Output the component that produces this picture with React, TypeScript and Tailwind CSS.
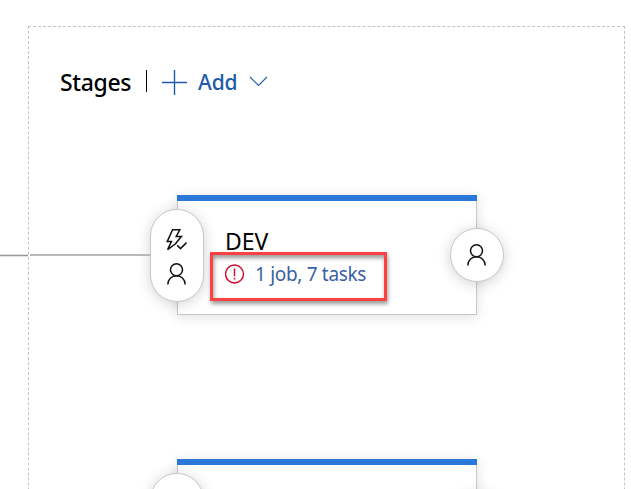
import React from "react";

function PersonIcon() {
  return (
    <svg width="20" height="22" viewBox="0 0 20 22" fill="none" stroke="#111" strokeWidth="1.5">
      <circle cx="9.5" cy="6.8" r="6" />
      <path d="M.8 21.5C.8 16.4 4.6 12.8 9.5 12.8s8.7 3.6 8.7 8.7" />
    </svg>
  );
}

function TriggerIcon() {
  return (
    <svg width="22" height="22" viewBox="0 0 22 22" fill="none" stroke="#111" strokeWidth="1.5">
      <path d="M10.6 14 1.6 20.6 5.4 12.6H1.2L6.6.8h7.2L10.2 7.4h5.2L9 15.2" />
      <path d="m11.2 16.2 3.3 3.4 6-6" />
    </svg>
  );
}

function AlertIcon() {
  return (
    <svg width="20" height="20" viewBox="0 0 20 20" fill="none" stroke="#d0092b" strokeWidth="1.4">
      <circle cx="9.5" cy="10" r="9" />
      <path d="M9.5 4.6v7.6M9.5 13.7v1.8" />
    </svg>
  );
}

const handle =
  "absolute flex flex-col items-center border border-[#c8c8c8] bg-white shadow-[0_2px_14px_rgba(0,0,0,0.18)]";

function Stage({ name, tasks }: { name?: string; tasks?: string }) {
  return (
    <section className="relative h-[120px] w-[300px] border border-t-0 border-[#c8c8c8] bg-white shadow-[0_2px_12px_rgba(0,0,0,0.13)]">
      <div className="-mx-px h-[6px] bg-[#2b78d8]" />
      {name && (
        <div className="pl-[47px] pt-[26px]">
          <h2 className="h-[28px] whitespace-nowrap text-[23px] leading-[28px] tracking-[-0.1px] text-black">{name}</h2>
          <div className="mt-[4px] flex h-[30px] items-center">
            <AlertIcon />
            <span className="ml-[10px] whitespace-nowrap text-[19px] leading-[30px] tracking-[-0.32px] text-[#3a5fa5]">{tasks}</span>
          </div>
        </div>
      )}
      <div className={`${handle} -left-[28px] top-[14px] h-[93px] w-[54px] gap-[12px] rounded-[27px] pt-[19px]`}>
        <TriggerIcon />
        <PersonIcon />
      </div>
      <div className={`${handle} -right-[28px] top-[33px] h-[54px] w-[54px] justify-center rounded-full`}>
        <PersonIcon />
      </div>
    </section>
  );
}

export default function App() {
  return (
    <main className="relative h-[489px] w-[631px] overflow-hidden bg-white pl-[28px] pt-[26px] font-['Noto_Sans',sans-serif]">
      <div className="h-[580px] w-[597px] border border-dashed border-[#c3c3c3]">
        <header className="mt-[41px] flex h-[28px] items-center pl-[31px]">
          <h1 className="w-[71px] whitespace-nowrap text-[23px] font-medium leading-[28px] tracking-[-0.35px] text-black">Stages</h1>
          <span className="ml-[15px] h-[22px] w-px -translate-y-px bg-black" />
          <button className="ml-[15px] flex items-center text-[#215ba7]">
            <svg width="25" height="25" viewBox="0 0 25 25" fill="none" stroke="currentColor" strokeWidth="1.4">
              <path d="M12.5 0v25M0 12.5h25" />
            </svg>
            <span className="ml-[11px] w-[41px] text-left text-[21px] font-medium leading-[28px] tracking-[-0.1px]">Add</span>
            <svg className="ml-[10px] -translate-y-px" width="19" height="11" viewBox="0 0 19 11" fill="none" stroke="currentColor" strokeWidth="1.1">
              <path d="m1 1 8.5 8.5L18 1" />
            </svg>
          </button>
        </header>
        <div className="ml-[148px] mt-[99px] flex flex-col gap-[144px]">
          <Stage name="DEV" tasks="1 job, 7 tasks" />
          <Stage />
        </div>
      </div>
      <div className="absolute left-0 top-[254px] flex w-[150px] items-start">
        <span className="h-[3px] w-[28px] border-y border-[#dfe4df] bg-[#999]" />
        <span className="ml-[2px] h-[2px] flex-1 bg-[#b8b8b8]" />
      </div>
      <div className="absolute left-[210px] top-[252px] h-[49px] w-[177px] border-[3px] border-[#fb4141] shadow-[1px_3px_4px_rgba(0,0,0,0.4),inset_1px_3px_4px_rgba(0,0,0,0.4)]" />
    </main>
  );
}
